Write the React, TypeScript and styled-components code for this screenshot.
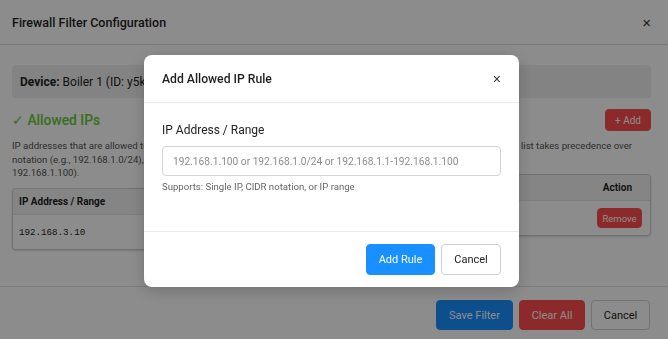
import styled, { createGlobalStyle } from "styled-components";

const GlobalStyle = createGlobalStyle`
  html, body {
    margin: 0;
    padding: 0;
    background: #ffffff;
    font-family: Roboto, "Liberation Sans", Arial, sans-serif;
    color: #222;
  }
  * { box-sizing: border-box; }
`;

// ---------- outer (background) modal ----------

const Page = styled.div`
  width: 668px;
  height: 339px;
  overflow: hidden;
  background: #fff;
`;

const Header = styled.div`
  height: 45px;
  display: flex;
  align-items: center;
  justify-content: space-between;
  padding: 0 17px 0 12px;
  border-bottom: 1px solid #dedede;
`;

const Title = styled.h2`
  margin: 0;
  font-size: 12.5px;
  font-weight: 500;
  color: #1f1f1f;
`;

const Close = styled.button<{ $size?: number }>`
  border: 0;
  background: none;
  padding: 0;
  font-family: "Liberation Sans", Arial, sans-serif;
  font-size: ${({ $size }) => $size ?? 15}px;
  line-height: 1;
  color: #333;
  cursor: pointer;
`;

const Body = styled.div`
  padding: 20px 17px 36px 12px;
`;

const DeviceBox = styled.div`
  height: 33px;
  display: flex;
  align-items: center;
  padding: 0 8px;
  background: #efefef;
  border-radius: 4px;
  font-size: 12px;
  color: #222;
  white-space: nowrap;
  overflow: hidden;

  strong {
    font-weight: 700;
    margin-right: 3px;
  }
`;

const SectionHead = styled.div`
  display: flex;
  align-items: center;
  justify-content: space-between;
  margin-top: 11px;
`;

const SectionTitle = styled.h3`
  margin: 0;
  font-size: 13.8px;
  font-weight: 500;
  color: #66c832;
`;

const Btn = styled.button<{ $tone: "primary" | "danger" | "plain"; $h: number; $w: number; $fs?: number }>`
  height: ${({ $h }) => $h}px;
  width: ${({ $w }) => $w}px;
  padding: 0;
  border-radius: 4px;
  font-family: Roboto, "Liberation Sans", Arial, sans-serif;
  font-size: ${({ $fs }) => $fs ?? 11}px;
  cursor: pointer;
  border: 1px solid
    ${({ $tone }) => ($tone === "primary" ? "#1890ff" : $tone === "danger" ? "#ff4d4f" : "#d0d0d0")};
  background: ${({ $tone }) => ($tone === "primary" ? "#1890ff" : $tone === "danger" ? "#ff4d4f" : "#fff")};
  color: ${({ $tone }) => ($tone === "plain" ? "#222" : "#fff")};
`;

const Columns = styled.div`
  display: grid;
  grid-template-columns: 330px 1fr;
  align-items: start;
  margin-top: 8px;
`;

const Desc = styled.p<{ $align?: "left" | "right"; $lines: number }>`
  margin: 0;
  font-size: 9.6px;
  line-height: 13.7px;
  min-height: ${({ $lines }) => $lines * 13.7}px;
  color: #555;
  white-space: nowrap;
  overflow: hidden;
  text-align: ${({ $align }) => $align ?? "left"};
  padding-right: ${({ $align }) => ($align === "right" ? 19 : 0)}px;
`;

const TableHalf = styled.div<{ $side: "left" | "right" }>`
  margin-top: 8px;
  border: 1px solid #cfcfcf;
  ${({ $side }) =>
    $side === "left"
      ? "border-right: 0; border-radius: 4px 0 0 4px;"
      : "border-left: 0; border-radius: 0 4px 4px 0;"}
  box-shadow: 0 1px 2px rgba(0, 0, 0, 0.15);
  overflow: hidden;
`;

const HeadCell = styled.div<{ $align?: "left" | "right" }>`
  height: 26px;
  display: flex;
  align-items: center;
  justify-content: ${({ $align }) => ($align === "right" ? "flex-end" : "flex-start")};
  padding: 0 ${({ $align }) => ($align === "right" ? 18 : 6)}px;
  background: #f2f2f2;
  border-bottom: 1px solid #e4e4e4;
  font-size: 10px;
  font-weight: 700;
  color: #1f1f1f;
`;

const RowCell = styled.div<{ $align?: "left" | "right" }>`
  height: 34px;
  display: flex;
  align-items: center;
  justify-content: ${({ $align }) => ($align === "right" ? "flex-end" : "flex-start")};
  padding: 0 ${({ $align }) => ($align === "right" ? 8 : 6)}px;
  font-family: "Liberation Mono", "DejaVu Sans Mono", monospace;
  font-size: 9.2px;
  color: #1f1f1f;
`;

const Footer = styled.div`
  display: flex;
  justify-content: flex-end;
  gap: 6px;
  padding: 13px 18px 13px 12px;
  border-top: 1px solid #dedede;
`;

// ---------- overlay + inner dialog ----------

const Overlay = styled.div`
  position: fixed;
  inset: 0;
  background: rgba(0, 0, 0, 0.45);
`;

const Dialog = styled.div`
  position: fixed;
  left: 144px;
  top: 55px;
  width: 375px;
  background: #fff;
  border-radius: 8px;
  box-shadow: 0 4px 16px rgba(0, 0, 0, 0.2);
  overflow: hidden;
`;

const DialogHead = styled.div`
  height: 48px;
  display: flex;
  align-items: center;
  justify-content: space-between;
  padding: 0 18px;
  border-bottom: 1px solid #ebebeb;
`;

const DialogTitle = styled.h4`
  margin: 0;
  font-size: 12.2px;
  font-weight: 500;
  color: #1f1f1f;
`;

const DialogBody = styled.div`
  padding: 20px 18px 0;
  height: 129px;
  border-bottom: 1px solid #ebebeb;
`;

const Label = styled.label`
  display: block;
  font-size: 12px;
  color: #222;
  margin-bottom: 9px;
`;

const Input = styled.input`
  display: block;
  width: 100%;
  height: 30px;
  padding: 0 10px;
  border: 1px solid #d4d4d4;
  border-radius: 4px;
  font-family: Roboto, "Liberation Sans", Arial, sans-serif;
  font-size: 10.2px;
  outline: none;

  &::placeholder {
    color: #8c8c8c;
  }
`;

const Hint = styled.div`
  margin-top: 5px;
  font-size: 9.6px;
  color: #666;
`;

const DialogFoot = styled.div`
  display: flex;
  justify-content: flex-end;
  gap: 6px;
  padding: 12px 18px;
`;

export default function App() {
  return (
    <>
      <GlobalStyle />
      <Page>
        <Header>
          <Title>Firewall Filter Configuration</Title>
          <Close>×</Close>
        </Header>
        <Body>
          <DeviceBox>
            <strong>Device:</strong> Boiler 1 (ID: y5k8)
          </DeviceBox>
          <SectionHead>
            <SectionTitle>✓ Allowed IPs</SectionTitle>
            <Btn $tone="danger" $h={22} $w={46} $fs={10}>
              + Add
            </Btn>
          </SectionHead>
          <Columns>
            <div>
              <Desc $lines={3}>
                IP addresses that are allowed to connect to this device. The allow
                <br />
                notation (e.g., 192.168.1.0/24), or an IP range (e.g., 192.168.1.1-
                <br />
                192.168.1.100).
              </Desc>
              <TableHalf $side="left">
                <HeadCell>IP Address / Range</HeadCell>
                <RowCell>192.168.3.10</RowCell>
              </TableHalf>
            </div>
            <div>
              <Desc $lines={2} $align="right">
                Single IP, CIDR or range. The allow list takes precedence over
              </Desc>
              <TableHalf $side="right">
                <HeadCell $align="right">Action</HeadCell>
                <RowCell $align="right">
                  <Btn $tone="danger" $h={20} $w={45} $fs={9.5}>
                    Remove
                  </Btn>
                </RowCell>
              </TableHalf>
            </div>
          </Columns>
        </Body>
        <Footer>
          <Btn $tone="primary" $h={30} $w={77}>
            Save Filter
          </Btn>
          <Btn $tone="danger" $h={30} $w={66}>
            Clear All
          </Btn>
          <Btn $tone="plain" $h={30} $w={59}>
            Cancel
          </Btn>
        </Footer>
      </Page>
      <Overlay />
      <Dialog>
        <DialogHead>
          <DialogTitle>Add Allowed IP Rule</DialogTitle>
          <Close $size={14}>×</Close>
        </DialogHead>
        <DialogBody>
          <Label>IP Address / Range</Label>
          <Input placeholder="192.168.1.100 or 192.168.1.0/24 or 192.168.1.1-192.168.1.100" />
          <Hint>Supports: Single IP, CIDR notation, or IP range</Hint>
        </DialogBody>
        <DialogFoot>
          <Btn $tone="primary" $h={31} $w={69} $fs={11}>
            Add Rule
          </Btn>
          <Btn $tone="plain" $h={31} $w={60} $fs={11}>
            Cancel
          </Btn>
        </DialogFoot>
      </Dialog>
    </>
  );
}
